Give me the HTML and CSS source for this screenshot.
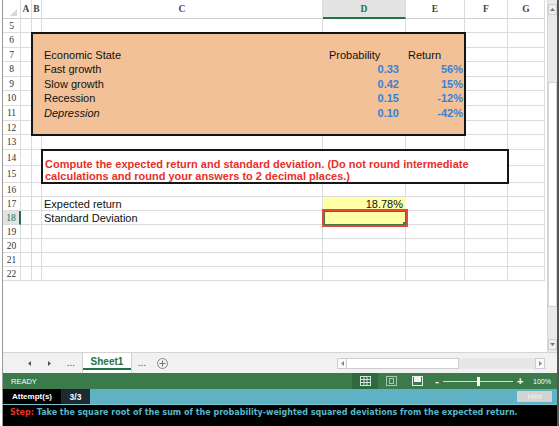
FILE: index.html
```html
<!DOCTYPE html>
<html lang="en">
<head>
    <meta charset="UTF-8">
    <meta name="viewport" content="width=device-width, initial-scale=1.0">
    <title>Expected return</title>
    <link rel="stylesheet" href="styles.css">
</head>
<body>
<div class="app">
    <div class="workspace">
        <div class="sheet">
            <div class="cells">
                <div class="row head">
                    <div class="corner"><span class="tri"></span></div>
                    <div>A</div><div>B</div><div>C</div><div class="sel-col">D</div><div>E</div><div>F</div><div>G</div>
                </div>
                <div class="row h14"><div class="rh">5</div><div></div><div></div><div></div><div></div><div></div><div></div><div></div></div>
                <div class="row h15"><div class="rh">6</div><div></div><div></div><div></div><div></div><div></div><div></div><div></div></div>
                <div class="row h14"><div class="rh">7</div><div></div><div></div><div></div><div></div><div></div><div></div><div></div></div>
                <div class="row h15"><div class="rh">8</div><div></div><div></div><div></div><div></div><div></div><div></div><div></div></div>
                <div class="row h14"><div class="rh">9</div><div></div><div></div><div></div><div></div><div></div><div></div><div></div></div>
                <div class="row h15"><div class="rh">10</div><div></div><div></div><div></div><div></div><div></div><div></div><div></div></div>
                <div class="row h15"><div class="rh">11</div><div></div><div></div><div></div><div></div><div></div><div></div><div></div></div>
                <div class="row h14"><div class="rh">12</div><div></div><div></div><div></div><div></div><div></div><div></div><div></div></div>
                <div class="row h15"><div class="rh">13</div><div></div><div></div><div></div><div></div><div></div><div></div><div></div></div>
                <div class="row h16"><div class="rh">14</div><div></div><div></div><div></div><div></div><div></div><div></div><div></div></div>
                <div class="row h17"><div class="rh">15</div><div></div><div></div><div></div><div></div><div></div><div></div><div></div></div>
                <div class="row h14"><div class="rh">16</div><div></div><div></div><div></div><div></div><div></div><div></div><div></div></div>
                <div class="row h14"><div class="rh">17</div><div></div><div></div><div></div><div></div><div></div><div></div><div></div></div>
                <div class="row h14"><div class="rh sel-row">18</div><div></div><div></div><div></div><div></div><div></div><div></div><div></div></div>
                <div class="row h14"><div class="rh">19</div><div></div><div></div><div></div><div></div><div></div><div></div><div></div></div>
                <div class="row h14"><div class="rh">20</div><div></div><div></div><div></div><div></div><div></div><div></div><div></div></div>
                <div class="row h14"><div class="rh">21</div><div></div><div></div><div></div><div></div><div></div><div></div><div></div></div>
                <div class="row h14"><div class="rh">22</div><div></div><div></div><div></div><div></div><div></div><div></div><div></div></div>
            </div>

            <div class="overlay">
                <div class="econ-box">
                    <div class="gap"></div>
                    <div class="lbl">Economic State</div><div class="num plain">Probability</div><div class="pct plain">Return</div>
                    <div class="lbl">Fast growth</div><div class="num">0.33</div><div class="pct">56%</div>
                    <div class="lbl">Slow growth</div><div class="num">0.42</div><div class="pct">15%</div>
                    <div class="lbl">Recession</div><div class="num">0.15</div><div class="pct">-12%</div>
                    <div class="lbl italic">Depression</div><div class="num">0.10</div><div class="pct">-42%</div>
                </div>
                <div class="task-box">Compute the expected return and standard deviation. (Do not round intermediate calculations and round your answers to 2 decimal places.)</div>
                <div class="cell label-17">Expected return</div>
                <div class="cell label-18">Standard Deviation</div>
                <div class="cell answer answer-17">18.78%</div>
                <div class="cell answer answer-18"><span class="handle"></span></div>
            </div>
        </div>

        <div class="vscroll">
            <div class="sbtn up"><svg width="5" height="3" viewBox="0 0 5 3"><path d="M0 3L2.5 0 5 3z" fill="#777"/></svg></div>
            <div class="vthumb"></div>
            <div class="sbtn down"><svg width="5" height="3" viewBox="0 0 5 3"><path d="M0 0L2.5 3 5 0z" fill="#777"/></svg></div>
        </div>
    </div>

    <div class="tabbar">
        <span class="nav"><svg width="3" height="5" viewBox="0 0 3 5"><path d="M3 0L0 2.5 3 5z" fill="#555"/></svg></span>
        <span class="nav"><svg width="3" height="5" viewBox="0 0 3 5"><path d="M0 0L3 2.5 0 5z" fill="#555"/></svg></span>
        <span class="dots">...</span>
        <span class="tab">Sheet1</span>
        <span class="dots">...</span>
        <span class="add"><svg width="11" height="11" viewBox="0 0 11 11"><circle cx="5.5" cy="5.5" r="5" fill="none" stroke="#888"/><path d="M5.5 2.5v6M2.5 5.5h6" stroke="#777"/></svg></span>
        <div class="hscroll">
            <span class="hbtn"><svg width="3" height="5" viewBox="0 0 3 5"><path d="M3 0L0 2.5 3 5z" fill="#888"/></svg></span>
            <span class="hthumb"></span>
            <span class="htrack"></span>
            <span class="hbtn"><svg width="3" height="5" viewBox="0 0 3 5"><path d="M0 0L3 2.5 0 5z" fill="#888"/></svg></span>
        </div>
    </div>

    <div class="status">
        <span class="ready">READY</span>
        <span class="view active">
            <svg width="11" height="10" viewBox="0 0 11 10"><rect x=".5" y=".5" width="10" height="9" fill="none" stroke="#d4e4d8"/><path d="M4 .5v9M7 .5v9M.5 3.5h10M.5 6.5h10" stroke="#d4e4d8"/></svg>
        </span>
        <span class="view">
            <svg width="11" height="10" viewBox="0 0 11 10"><rect x=".5" y=".5" width="10" height="9" fill="none" stroke="#a9c7b1"/><rect x="3.5" y="2.5" width="4" height="5" fill="none" stroke="#a9c7b1"/></svg>
        </span>
        <span class="view">
            <svg width="11" height="10" viewBox="0 0 11 10"><rect x=".5" y=".5" width="10" height="9" fill="none" stroke="#e6efe8"/><rect x="2" y="1" width="7" height="5" fill="#f2f6f3"/></svg>
        </span>
        <span class="zoom">
            <span class="minus">-</span>
            <span class="slider"><span class="knob"></span></span>
            <span class="plus">+</span>
            <span class="pctlabel">100%</span>
        </span>
    </div>

    <div class="attempts">
        <span class="att-label">Attempt(s)</span>
        <span class="att-count">3/3</span>
        <span class="hint">Hint</span>
    </div>

    <div class="step"><span class="step-tag">Step:</span> Take the square root of the sum of the probability-weighted squared deviations from the expected return.</div>
</div>
</body>
</html>
```

FILE: styles.css
```css
:root {
    --cols: 18px 11px 10px 281px 83px 59px 43px 37px;
    --grid-line: #dcdcdc;
    --excel-green: #217346;
    --peach: #f2c197;
    --blue: #3a7fd5;
    --red: #e8302a;
    --teal: #5fb2c4;
}

* {
    box-sizing: border-box;
}

body {
    margin: 0;
    font-family: "Liberation Sans", Arial, sans-serif;
    background-color: #fff;
}

.app {
    width: 557px;
    height: 426px;
    margin-left: 2px;
    border-left: 1px solid #9a9a9a;
    border-right: 2px solid #555;
    display: flex;
    flex-direction: column;
}

/* grid area */
.workspace {
    height: 352px;
    display: flex;
    gap: 2px;
}

.sheet {
    width: 542px;
    display: grid;
    align-content: start;
}

.cells,
.overlay {
    grid-area: 1 / 1;
}

.row {
    display: grid;
    grid-template-columns: var(--cols);
}

.row > div {
    border-right: 1px solid var(--grid-line);
    border-bottom: 1px solid var(--grid-line);
}

.h14 { height: 14px; }
.h15 { height: 15px; }
.h16 { height: 16px; }
.h17 { height: 17px; }

.head {
    height: 19px;
}

.head > div {
    font: bold 9.5px "Liberation Serif", serif;
    color: #444;
    display: flex;
    align-items: center;
    justify-content: center;
    border-bottom-color: #cfcfcf;
}

.head > .corner {
    align-items: flex-end;
    justify-content: flex-end;
    padding: 0 3px 2px 0;
}

.tri {
    width: 0;
    height: 0;
    border-left: 7px solid transparent;
    border-bottom: 7px solid #d8d8d8;
}

.head > .sel-col {
    background-color: #e3e3e3;
    color: var(--excel-green);
    border-bottom: 2px solid var(--excel-green);
}

.rh {
    font: 9.5px "Liberation Serif", serif;
    color: #333;
    display: flex;
    align-items: center;
    justify-content: center;
}

.row > .sel-row {
    background-color: #e3e3e3;
    color: var(--excel-green);
    border-right: 2px solid var(--excel-green);
}

/* content layer */
.overlay {
    display: grid;
    grid-template-columns: var(--cols);
    grid-template-rows: 19px 14px 15px 14px 15px 14px 15px 15px 14px 15px 16px 17px repeat(7, 14px);
    font-size: 11px;
    color: #111;
}

.econ-box {
    grid-column: 3 / 7;
    grid-row: 3 / 10;
    background-color: var(--peach);
    box-shadow: 0 0 0 1px #151515, inset 0 0 0 1px #151515;
    display: grid;
    grid-template-columns: 10px 281px 83px 59px;
    grid-template-rows: 15px 14px 15px 14px 15px 15px 14px;
}

.econ-box .gap {
    grid-column: 1 / -1;
}

.econ-box > div {
    line-height: 14px;
    white-space: nowrap;
}

.lbl {
    grid-column: 2;
    padding-left: 2px;
}

.italic {
    font-style: italic;
}

.num {
    grid-column: 3;
    text-align: right;
    padding-right: 7px;
    font-weight: bold;
    color: var(--blue);
}

.pct {
    grid-column: 4;
    text-align: right;
    padding-right: 2px;
    font-weight: bold;
    color: var(--blue);
}

.num.plain,
.pct.plain {
    text-align: left;
    font-weight: normal;
    color: #111;
}

.num.plain {
    padding-left: 6px;
}

.pct.plain {
    padding-left: 2px;
}

.task-box {
    grid-column: 4 / 8;
    grid-row: 11 / 13;
    background-color: #fff;
    box-shadow: 0 0 0 1px #151515, inset 0 0 0 1px #151515;
    padding: 8px 4px 0 3px;
    font-weight: bold;
    color: var(--red);
    line-height: 12px;
}

.cell {
    line-height: 14px;
    white-space: nowrap;
}

.label-17 {
    grid-column: 4;
    grid-row: 14;
    padding-left: 2px;
}

.label-18 {
    grid-column: 4;
    grid-row: 15;
    padding-left: 2px;
}

.answer {
    grid-column: 5;
    background-color: #ffffa6;
    text-align: right;
    padding-right: 3px;
}

.answer-17 {
    grid-row: 14;
    margin-bottom: 1px;
}

.answer-18 {
    grid-row: 15;
    margin: -2px -2px -2px -1px;
    border: 2px solid #e5473b;
    box-shadow: inset 0 0 0 1px #3e7a4b;
    display: flex;
    align-items: flex-end;
    justify-content: flex-end;
    padding: 0;
}

.handle {
    width: 3px;
    height: 3px;
    background-color: #3e7a4b;
}

/* vertical scrollbar */
.vscroll {
    width: 10px;
    background-color: #e9e9e9;
    border-left: 1px solid #d6d6d6;
    display: flex;
    flex-direction: column;
    align-items: center;
}

.sbtn {
    width: 9px;
    height: 11px;
    background-color: #eee;
    border: 1px solid #cfcfcf;
    display: flex;
    align-items: center;
    justify-content: center;
}

.sbtn.up {
    margin-top: 4px;
}

.sbtn.down {
    margin-top: auto;
    margin-bottom: 2px;
}

.vthumb {
    width: 9px;
    height: 225px;
    margin-top: 67px;
    background-color: #fff;
    border: 1px solid #d2d2d2;
}

/* sheet tabs */
.tabbar {
    height: 21px;
    background-color: #f1f1f1;
    border-top: 1px solid #d4d4d4;
    display: flex;
    align-items: stretch;
    padding-left: 24px;
    font-size: 10px;
    color: #555;
}

.nav {
    width: 20px;
    display: flex;
    align-items: center;
    padding-left: 1px;
}

.dots {
    width: 15px;
    display: flex;
    align-items: center;
    font-weight: bold;
    font-size: 8px;
    letter-spacing: 0.5px;
    color: #666;
}

.tab {
    width: 50px;
    margin-right: 6px;
    background-color: #fff;
    border-left: 1px solid #cfcfcf;
    border-right: 1px solid #cfcfcf;
    display: flex;
    align-items: center;
    justify-content: center;
    font-weight: bold;
    color: var(--excel-green);
    box-shadow: inset 0 -3px 0 #fff, inset 0 -5px 0 var(--excel-green);
    padding-bottom: 3px;
}

.add {
    display: flex;
    align-items: center;
    padding-left: 4px;
}

.hscroll {
    margin-left: auto;
    margin-right: 12px;
    align-self: center;
    width: 208px;
    height: 11px;
    display: flex;
}

.hbtn {
    width: 10px;
    background-color: #fafafa;
    border: 1px solid #cdcdcd;
    display: flex;
    align-items: center;
    justify-content: center;
}

.hthumb {
    width: 112px;
    background-color: #fff;
    border: 1px solid #cdcdcd;
    border-left: none;
}

.htrack {
    flex: 1;
    background-color: #e7e7e7;
}

/* status bar */
.status {
    height: 16px;
    background-color: #3b7a4b;
    color: #fff;
    display: flex;
    align-items: stretch;
    font-size: 7.5px;
}

.ready {
    width: 349px;
    padding-left: 8px;
    display: flex;
    align-items: center;
}

.view {
    width: 26px;
    display: flex;
    align-items: center;
    justify-content: center;
}

.view.active {
    background-color: #2f6a3f;
}

.zoom {
    display: flex;
    align-items: center;
    padding-left: 4px;
}

.minus,
.plus {
    font-size: 11px;
    font-weight: bold;
    width: 6px;
    text-align: center;
    line-height: 10px;
}

.slider {
    width: 70px;
    height: 1px;
    margin: 0 4px 0 3px;
    background-color: #cfe0d3;
    display: flex;
    align-items: center;
    justify-content: center;
}

.knob {
    width: 3px;
    height: 9px;
    background-color: #fff;
}

.pctlabel {
    margin-left: 10px;
    font-size: 7px;
}

/* attempts */
.attempts {
    height: 15px;
    background-color: var(--teal);
    display: flex;
    align-items: stretch;
    font-size: 8px;
    font-weight: bold;
    color: #fff;
}

.att-label {
    width: 58px;
    background-color: #000;
    padding-left: 9px;
    display: flex;
    align-items: center;
}

.att-count {
    width: 29px;
    background-color: #1d2a31;
    display: flex;
    align-items: center;
    justify-content: center;
    font-size: 8.5px;
}

.hint {
    margin: 2px 5px 2px auto;
    width: 35px;
    background-color: #d3d3d3;
    color: #f4f4f4;
    font-weight: normal;
    display: flex;
    align-items: center;
    justify-content: center;
    border-radius: 1px;
}

/* step message */
.step {
    height: 22px;
    background-color: #000;
    border-top: 1px solid #7fc3d1;
    color: #5ab4ca;
    font-family: "DejaVu Sans", Verdana, sans-serif;
    font-size: 8px;
    font-weight: bold;
    padding: 3px 0 0 7px;
    white-space: nowrap;
}

.step-tag {
    color: var(--red);
}
```
